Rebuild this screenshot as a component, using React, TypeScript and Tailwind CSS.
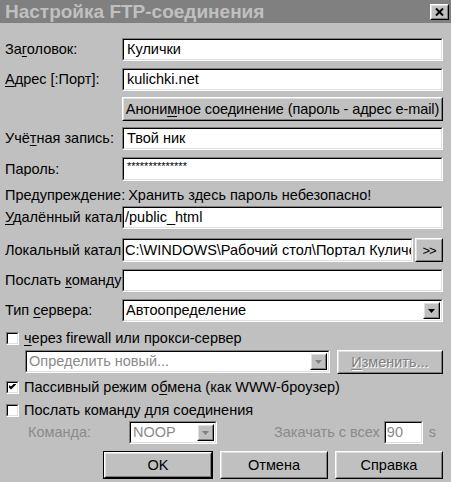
import type { ReactNode } from "react";

const raisedOuter = "border border-t-white border-l-white border-b-black border-r-black";
const raisedInner =
  "h-full border border-t-[#dfdfdf] border-l-[#dfdfdf] border-b-[#808080] border-r-[#808080]";

function U({ children }: { children: ReactNode }) {
  return <span className="underline underline-offset-[2px]">{children}</span>;
}

function Field({ children, className = "" }: { children?: ReactNode; className?: string }) {
  return (
    <div className={`min-w-0 border border-t-[#808080] border-l-[#808080] border-b-white border-r-white ${className}`}>
      <div className="h-full border border-t-black border-l-black border-b-[#dfdfdf] border-r-[#dfdfdf] bg-white flex items-center overflow-hidden whitespace-nowrap">
        {children}
      </div>
    </div>
  );
}

function Raised({ children, className = "" }: { children?: ReactNode; className?: string }) {
  return (
    <div className={`min-w-0 ${raisedOuter} ${className}`}>
      <div className={`${raisedInner} flex items-center justify-center whitespace-nowrap overflow-hidden`}>{children}</div>
    </div>
  );
}

function Arrow({ disabled }: { disabled?: boolean }) {
  return (
    <svg width="7" height="4" viewBox="0 0 7 4">
      <polygon points="0,0 7,0 3.5,4" fill={disabled ? "#808080" : "#000"} />
    </svg>
  );
}

function Combo({
  value,
  className = "",
  disabled,
}: {
  value: string;
  className?: string;
  disabled?: boolean;
}) {
  return (
    <Field className={className}>
      <span className={`flex-1 min-w-0 pl-[2px] overflow-hidden ${disabled ? "text-[#8a8a8a]" : ""}`}>{value}</span>
      <div className={`${raisedOuter} w-[17px] h-[calc(100%-2px)] mr-[1px] shrink-0`}>
        <div className={`${raisedInner} bg-[#c0c0c0] flex items-center justify-center`}>
          <Arrow disabled={disabled} />
        </div>
      </div>
    </Field>
  );
}

function Row({ label, children, className = "" }: { label: ReactNode; children: ReactNode; className?: string }) {
  return (
    <div className={`flex items-center ${className}`}>
      <div className="w-[117px] shrink-0 overflow-hidden whitespace-nowrap">{label}</div>
      {children}
    </div>
  );
}

function Check({ checked, children, className = "" }: { checked?: boolean; children: ReactNode; className?: string }) {
  return (
    <div className={`flex items-center h-[16px] ${className}`}>
      <div className="w-[13px] h-[13px] ml-[1px] border border-t-[#808080] border-l-[#808080] border-b-white border-r-white">
        <div className="h-full border border-t-black border-l-black border-b-[#dfdfdf] border-r-[#dfdfdf] bg-white flex items-center justify-center">
          {checked && (
            <svg width="7" height="7" viewBox="0 0 7 7">
              <path d="M0 2 L2 4 L7 -1" stroke="#000" strokeWidth="2" fill="none" />
            </svg>
          )}
        </div>
      </div>
      <span className="ml-[5px] whitespace-nowrap">{children}</span>
    </div>
  );
}

export default function App() {
  return (
    <div className="w-[451px] h-[482px] bg-[#c0c0c0] overflow-hidden text-[14.5px] text-black font-['Liberation_Sans',Arial,sans-serif] leading-none">
      <div className="h-[23px] bg-[#808080] flex items-center justify-between pl-[5px] pr-[2px]">
        <span className="text-[19px] font-bold text-[#c0c0c0]">Настройка FTP-соединения</span>
        <div className={`${raisedOuter} w-[19px] h-[16px] mt-[1px]`}>
          <div className={`${raisedInner} bg-[#c0c0c0] flex items-center justify-center`}>
            <svg width="9" height="8" viewBox="0 0 9 8">
              <path d="M1 0.5 L8 7.5 M8 0.5 L1 7.5" stroke="#000" strokeWidth="2" />
            </svg>
          </div>
        </div>
      </div>

      <div className="pl-[5px] pr-[8px] pt-[15px] flex flex-col">
        <Row label={<>За<U>г</U>оловок:</>}>
          <Field className="flex-1 h-[23px]">
            <span className="pl-[3px]">Кулички</span>
          </Field>
        </Row>
        <Row label={<><U>А</U>дрес [:Порт]:</>} className="mt-[7px]">
          <Field className="flex-1 h-[23px]">
            <span className="pl-[3px]">kulichki.net</span>
          </Field>
        </Row>
        <div className="flex mt-[6px]">
          <div className="w-[117px] shrink-0" />
          <Raised className="flex-1 h-[24px] bg-[#c0c0c0]">
            <span className="text-[14.5px] tracking-[-0.1px]">
              Анони<U>м</U>ное соединение (пароль - адрес e-mail)
            </span>
          </Raised>
        </div>
        <Row label={<>Учё<U>т</U>ная запись:</>} className="mt-[6px]">
          <Field className="flex-1 h-[23px]">
            <span className="pl-[3px]">Твой ник</span>
          </Field>
        </Row>
        <Row label={<>Па<U>р</U>оль:</>} className="mt-[7px]">
          <Field className="flex-1 h-[24px]">
            <span className="pl-[3px] self-start pt-[2px] text-[11px]">**************</span>
          </Field>
        </Row>
        <div className="flex items-center h-[18px] mt-[5px] whitespace-nowrap">
          <span>Предупреждение:</span>
          <span className="ml-[3px]">Хранить здесь пароль небезопасно!</span>
        </div>
        <Row label={<><U>У</U>далённый каталог:</>} className="mt-[2px]">
          <Field className="flex-1 h-[23px]">
            <span className="pl-[1px]">/public_html</span>
          </Field>
        </Row>
        <Row label={<><U>Л</U>окальный каталог:</>} className="mt-[9px]">
          <Field className="flex-1 h-[24px]">
            <span className="pl-[1px] pr-[8px] overflow-hidden">C:\WINDOWS\Рабочий стол\Портал Куличек</span>
          </Field>
          <Raised className="w-[28px] shrink-0 h-[24px] ml-[2px] bg-[#c0c0c0] text-[13px]">
            <span className="tracking-[-1px]">&gt;&gt;</span>
          </Raised>
        </Row>
        <Row label={<>Послать <U>к</U>оманду:</>} className="mt-[7px]">
          <Field className="flex-1 h-[23px]" />
        </Row>
        <Row label={<>Тип <U>с</U>ервера:</>} className="mt-[7px]">
          <Combo value="Автоопределение" className="flex-1 h-[23px]" />
        </Row>

        <Check className="mt-[8px]">
          <U>ч</U>ерез firewall или прокси-сервер
        </Check>
        <div className="flex mt-[4px] pl-[20px]">
          <Combo value="Определить новый..." disabled className="w-[305px] shrink-0 h-[23px]" />
          <Raised className="flex-1 h-[24px] ml-[7px] text-[#808080]">
            <span className="[text-shadow:1px_1px_0_#fff]">
              <U>И</U>зменить...
            </span>
          </Raised>
        </div>
        <Check checked className="mt-[5px]">
          Пассивный режим о<U>б</U>мена (как WWW-броузер)
        </Check>
        <Check className="mt-[7px]">Послать команду для соединения</Check>

        <div className="flex items-center mt-[3px] h-[23px] text-[#8a8a8a]">
          <span className="w-[124px] pl-[23px] shrink-0">Команда:</span>
          <Combo value="NOOP" disabled className="w-[88px] shrink-0 h-[23px]" />
          <span className="ml-[57px] whitespace-nowrap">Закачать с всех</span>
          <Field className="w-[39px] shrink-0 h-[23px] ml-[4px]">
            <span className="pl-[1px] text-[#8a8a8a]">90</span>
          </Field>
          <span className="ml-[6px]">s</span>
        </div>

        <div className="flex mt-[7px] ml-[98px] gap-[7px]">
          <div className="border border-black">
            <Raised className="w-[108px] h-[26px] bg-[#c0c0c0]">OK</Raised>
          </div>
          <Raised className="w-[110px] h-[28px] bg-[#c0c0c0]">Отмена</Raised>
          <Raised className="w-[110px] h-[28px] bg-[#c0c0c0]">Справка</Raised>
        </div>
      </div>
    </div>
  );
}
